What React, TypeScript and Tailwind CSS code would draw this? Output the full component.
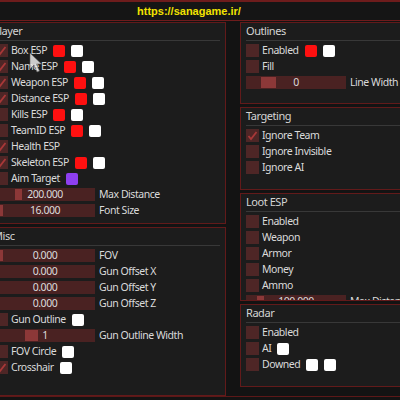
import React from "react";

type Row =
  | { kind: "check"; label: string; checked?: boolean; colors?: string[] }
  | { kind: "slider"; label: string; value: string; grab: [number, number] };

const player: Row[] = [
  { kind: "check", label: "Box ESP", checked: true, colors: ["#ff1010", "#ffffff"] },
  { kind: "check", label: "Name ESP", checked: true, colors: ["#ff1010", "#ffffff"] },
  { kind: "check", label: "Weapon ESP", checked: true, colors: ["#ff1010", "#ffffff"] },
  { kind: "check", label: "Distance ESP", checked: true, colors: ["#ff1010", "#ffffff"] },
  { kind: "check", label: "Kills ESP", colors: ["#ff1010", "#ffffff"] },
  { kind: "check", label: "TeamID ESP", colors: ["#ff1010", "#ffffff"] },
  { kind: "check", label: "Health ESP", checked: true },
  { kind: "check", label: "Skeleton ESP", checked: true, colors: ["#ff1010", "#ffffff"] },
  { kind: "check", label: "Aim Target", colors: ["#8e3ff0"] },
  { kind: "slider", label: "Max Distance", value: "200.000", grab: [20, 7] },
  { kind: "slider", label: "Font Size", value: "16.000", grab: [1, 7] },
];

const misc: Row[] = [
  { kind: "slider", label: "FOV", value: "0.000", grab: [1, 7] },
  { kind: "slider", label: "Gun Offset X", value: "0.000", grab: [0, 4] },
  { kind: "slider", label: "Gun Offset Y", value: "0.000", grab: [0, 4] },
  { kind: "slider", label: "Gun Offset Z", value: "0.000", grab: [0, 4] },
  { kind: "check", label: "Gun Outline", colors: ["#ffffff"] },
  { kind: "slider", label: "Gun Outline Width", value: "1", grab: [30, 13] },
  { kind: "check", label: "FOV Circle", colors: ["#ffffff"] },
  { kind: "check", label: "Crosshair", checked: true, colors: ["#ffffff"] },
];

const outlines: Row[] = [
  { kind: "check", label: "Enabled", colors: ["#ff1010", "#ffffff"] },
  { kind: "check", label: "Fill" },
  { kind: "slider", label: "Line Width", value: "0", grab: [15, 15] },
];

const targeting: Row[] = [
  { kind: "check", label: "Ignore Team", checked: true },
  { kind: "check", label: "Ignore Invisible" },
  { kind: "check", label: "Ignore AI" },
];

const loot: Row[] = [
  { kind: "check", label: "Enabled" },
  { kind: "check", label: "Weapon" },
  { kind: "check", label: "Armor" },
  { kind: "check", label: "Money" },
  { kind: "check", label: "Ammo" },
  { kind: "slider", label: "Max Distance", value: "100.000", grab: [11, 7] },
];

const radar: Row[] = [
  { kind: "check", label: "Enabled" },
  { kind: "check", label: "AI", colors: ["#ffffff"] },
  { kind: "check", label: "Downed", colors: ["#ffffff", "#ffffff"] },
];

function Check({ checked }: { checked?: boolean }) {
  return (
    <div className="w-[13px] h-[13px] shrink-0 bg-[#4e2626] flex items-center justify-center">
      {checked && (
        <svg width="11" height="11" viewBox="0 0 11 11">
          <polyline points="1.5,6 4,9 9.5,2" fill="none" stroke="#a83838" strokeWidth="1.8" />
        </svg>
      )}
    </div>
  );
}

function RowView({ row }: { row: Row }) {
  if (row.kind === "slider") {
    return (
      <div className="flex items-center h-[13px]">
        <div className="relative w-[100px] h-[13px] shrink-0 bg-[#4a2222] flex items-center justify-center">
          <div
            className="absolute top-[1px] bottom-[1px] bg-[#8c3838]"
            style={{ left: row.grab[0], width: row.grab[1] }}
          />
          <span className="relative text-[#dcdcdc]">{row.value}</span>
        </div>
        <span className="ml-[4px] whitespace-nowrap">{row.label}</span>
      </div>
    );
  }
  return (
    <div className="flex items-center h-[13px]">
      <Check checked={row.checked} />
      <span className="ml-[3px] whitespace-nowrap">{row.label}</span>
      {row.colors && (
        <div className="flex gap-[6px] ml-[6px]">
          {row.colors.map((c, i) => (
            <div key={i} className="w-[12px] h-[12px] rounded-[2px]" style={{ background: c }} />
          ))}
        </div>
      )}
    </div>
  );
}

function Panel({ title, rows, h, pad }: { title: string; rows: Row[]; h: string; pad: string }) {
  return (
    <div className={`${h} border border-[#621a1a] bg-[#1c1c1c] overflow-hidden`}>
      <div className="h-[18px] mx-[5px] border-b border-[#383838] flex items-center text-[#d4d4d4] text-[11px]">
        {title}
      </div>
      <div className={`flex flex-col gap-[3px] pt-[3px] ${pad}`}>
        {rows.map((r, i) => (
          <RowView key={i} row={r} />
        ))}
      </div>
    </div>
  );
}

export default function App() {
  return (
    <div className="relative w-[400px] h-[400px] overflow-hidden bg-[#131313] font-['Noto_Sans',sans-serif] text-[10.5px] tracking-[-0.45px] text-[#dadada]">
      {/* top bar */}
      <div className="h-[21px] border-t-2 border-b border-[#6e1c1c] bg-[#151515] flex items-center pl-[137px]">
        <span className="font-['Liberation_Sans',sans-serif] font-bold text-[11px] tracking-normal text-[#f2e200]">
          https://sanagame.ir/
        </span>
      </div>

      <div className="h-[376px] border-b border-[#5c1818] flex items-start pt-[1px]">
        <div className="ml-[-13px] w-[239px] shrink-0 flex flex-col gap-[3px]">
          <Panel title="Player" rows={player} h="h-[202px]" pad="px-[7px]" />
          <Panel title="Misc" rows={misc} h="h-[169px]" pad="px-[7px]" />
        </div>
        <div className="ml-[14px] w-[170px] shrink-0 flex flex-col gap-[3px]">
          <Panel title="Outlines" rows={outlines} h="h-[82px]" pad="px-[5px]" />
          <Panel title="Targeting" rows={targeting} h="h-[83px]" pad="px-[5px]" />
          <Panel title="Loot ESP" rows={loot} h="h-[108px]" pad="px-[5px]" />
          <Panel title="Radar" rows={radar} h="h-[83px]" pad="px-[5px]" />
        </div>
      </div>

      {/* mouse cursor */}
      <svg className="absolute left-[29px] top-[52px]" width="14" height="22" viewBox="0 0 14 22">
        <path
          d="M1 1 L1 17 L5 13 L8 20 L10.5 19 L7.5 12 L12.5 12 Z"
          fill="rgba(235,235,235,0.85)"
          stroke="rgba(90,90,90,0.7)"
          strokeWidth="0.8"
        />
      </svg>
    </div>
  );
}
